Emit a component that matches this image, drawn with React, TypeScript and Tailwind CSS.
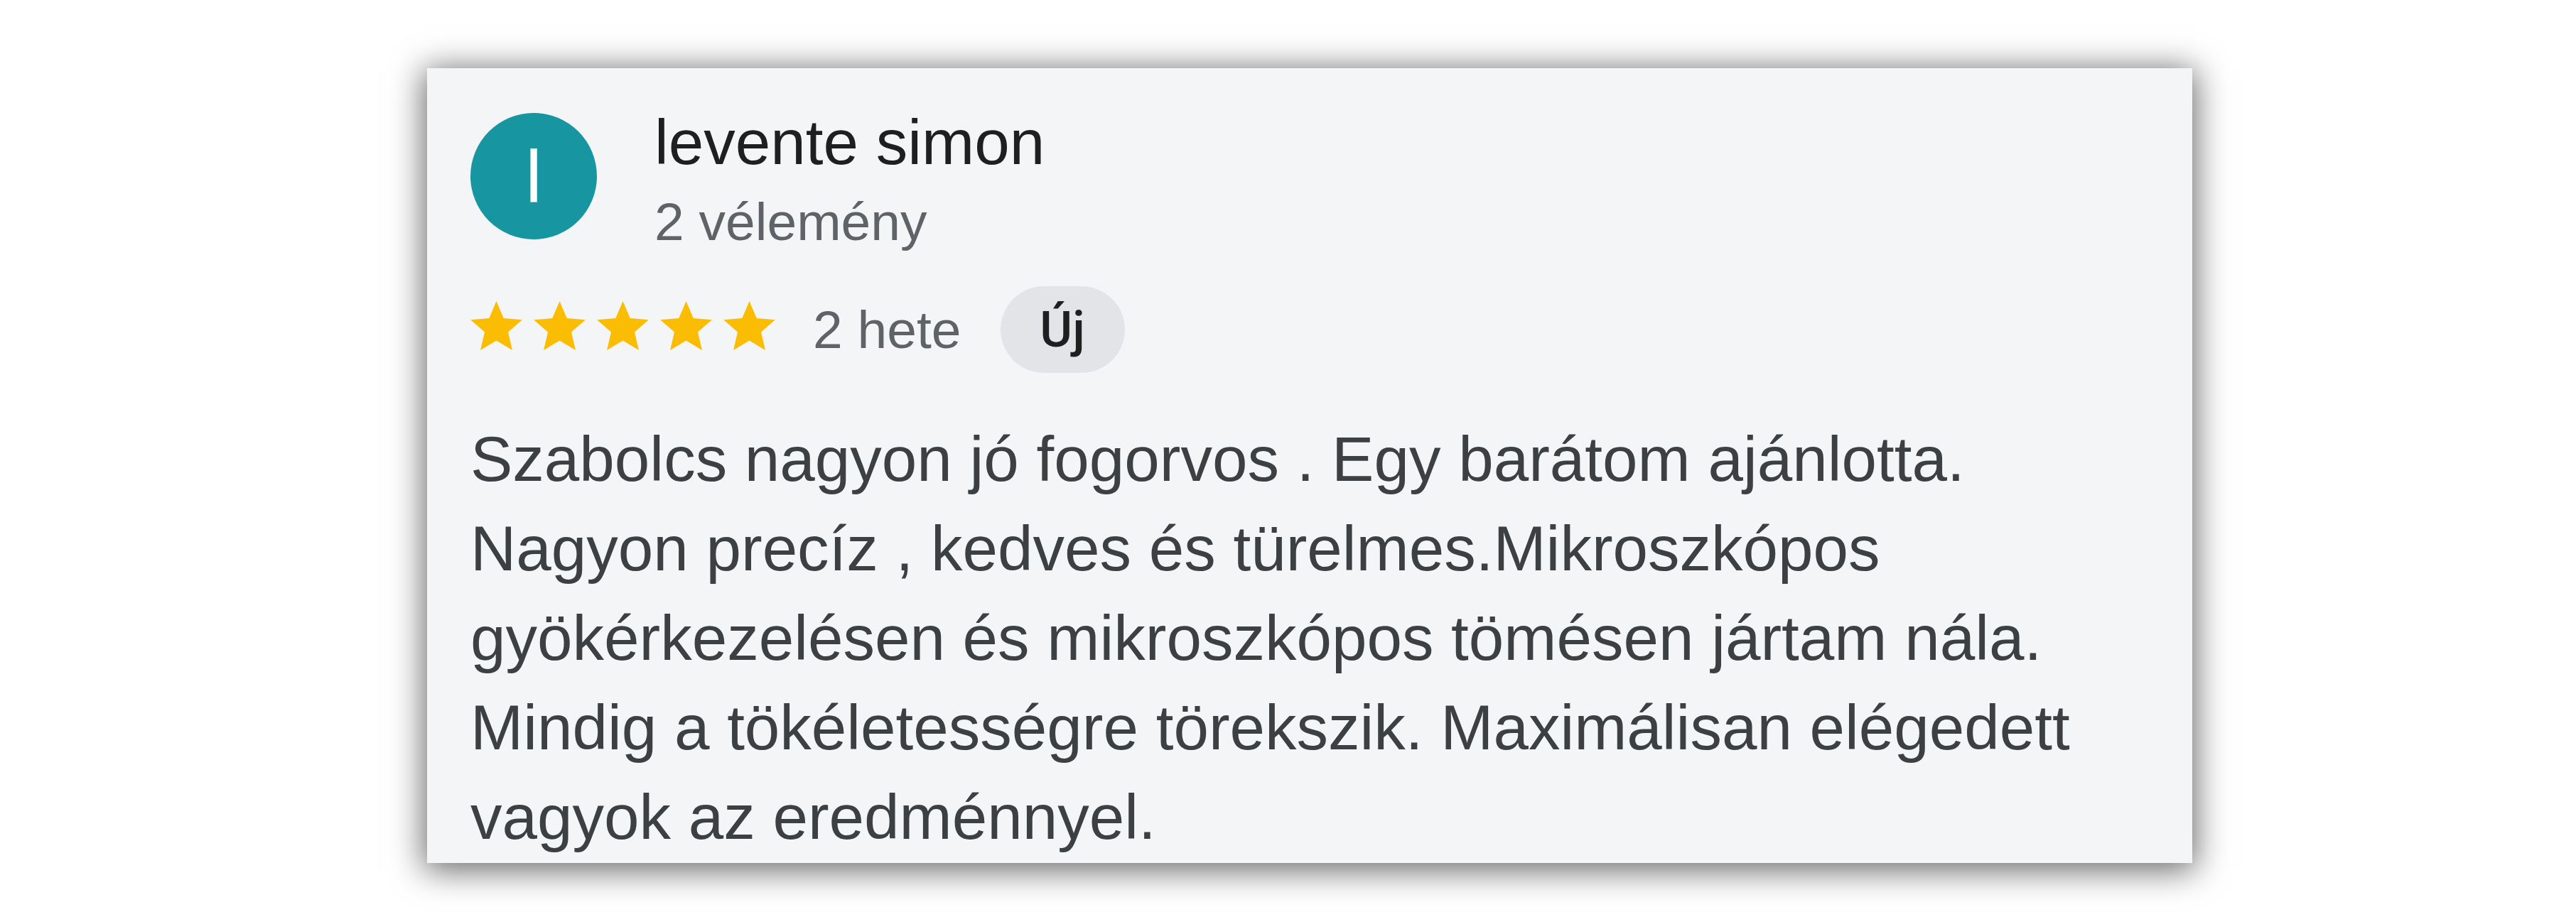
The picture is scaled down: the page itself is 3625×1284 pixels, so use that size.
import React from 'react';

const Star: React.FC = () => (
  <svg
    className="w-[73px] h-[69px] shrink-0"
    viewBox="2 2 20 19"
    xmlns="http://www.w3.org/2000/svg"
  >
    <path
      fill="#fbbc04"
      d="M12 17.27L18.18 21l-1.64-7.03L22 9.24l-7.19-.61L12 2 9.19 8.63 2 9.24l5.46 4.73L5.82 21z"
    />
  </svg>
);

const App: React.FC = () => {
  const body =
    'Szabolcs nagyon jó fogorvos . Egy barátom ajánlotta. Nagyon precíz , kedves és türelmes.Mikroszkópos gyökérkezelésen és mikroszkópos tömésen jártam nála. Mindig a tökéletességre törekszik. Maximálisan elégedett vagyok az eredménnyel.';

  return (
    <div
      className="min-h-screen bg-white pl-[601px] pt-[96px]"
      style={{ fontFamily: '"Liberation Sans", Arial, sans-serif' }}
    >
      <div className="w-[2484px] bg-[#f4f5f7] pl-[61px] pr-[61px] pt-[63px] pb-[2px] shadow-[0_6px_44px_4px_rgba(0,0,0,0.6)]">
        {/* Reviewer */}
        <div className="flex items-start">
          <div className="w-[178px] h-[178px] rounded-full bg-[#1795a1] flex items-center justify-center shrink-0">
            <span className="text-white text-[104px] leading-none">l</span>
          </div>
          <div className="ml-[81px] flex flex-col">
            <div className="text-[89px] leading-[83px] text-[#1f1f1f]">levente simon</div>
            <div className="mt-[30px] text-[75px] leading-[80px] text-[#5f6368]">2 vélemény</div>
          </div>
        </div>

        {/* Rating row */}
        <div className="mt-[51px] flex items-center h-[122px]">
          <div className="flex items-center gap-[16px] mb-[12px]">
            <Star />
            <Star />
            <Star />
            <Star />
            <Star />
          </div>
          <span className="ml-[53px] text-[75px] leading-[75px] text-[#5f6368]">2 hete</span>
          <span className="ml-[55px] h-[122px] w-[175px] rounded-full bg-[#e2e4e7] flex items-center justify-center font-['Roboto',sans-serif] text-[70px] font-medium text-[#1f1f1f]">
            Új
          </span>
        </div>

        {/* Review text */}
        <p className="mt-[58px] text-[89px] leading-[126px] text-[#3c4043]">{body}</p>
      </div>
    </div>
  );
};

export default App;
